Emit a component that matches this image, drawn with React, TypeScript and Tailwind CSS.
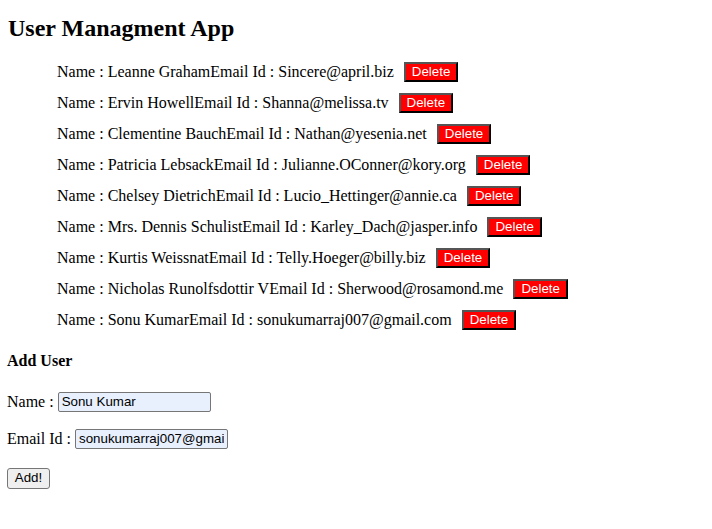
import React from "react";

const users = [
  ["Leanne Graham", "Sincere@april.biz"],
  ["Ervin Howell", "Shanna@melissa.tv"],
  ["Clementine Bauch", "Nathan@yesenia.net"],
  ["Patricia Lebsack", "Julianne.OConner@kory.org"],
  ["Chelsey Dietrich", "Lucio_Hettinger@annie.ca"],
  ["Mrs. Dennis Schulist", "Karley_Dach@jasper.info"],
  ["Kurtis Weissnat", "Telly.Hoeger@billy.biz"],
  ["Nicholas Runolfsdottir V", "Sherwood@rosamond.me"],
  ["Sonu Kumar", "sonukumarraj007@gmail.com"],
];

export default function App() {
  return (
    <div className="min-h-[529px] bg-white px-[8px] text-black text-[16px]" style={{ fontFamily: '"Liberation Serif", "Times New Roman", serif' }}>
      <h2 className="pt-[14px] text-[24px] font-bold leading-[28px]">User Managment App</h2>
      <ul className="mt-[20px] pl-[49px] flex flex-col gap-[11px]">
        {users.map(([n, e]) => (
          <li key={n} className="flex h-[20px] items-center leading-[18px]">
            <span>Name : {n}Email Id : {e}</span>
            <button
              className="ml-[10px] h-[20px] border-2 border-[#555] bg-[#ff0000] px-[6px] text-[13.33px] leading-[14px] text-white"
              style={{ fontFamily: '"Liberation Sans", Arial, sans-serif', borderStyle: "outset" }}
            >
              Delete
            </button>
          </li>
        ))}
      </ul>
      <div className="-ml-px">
        <h4 className="mt-[22px] font-bold leading-[18px]">Add User</h4>
        <div className="mt-[21px] flex h-[21px] items-center leading-[18px]">
          <span>Name :</span>
          <input
            readOnly
            value="Sonu Kumar"
            className="ml-[4px] h-[20px] w-[153px] rounded-[2px] border border-[#767676] bg-[#e8f0fe] px-[3px] text-[13.33px] outline-none"
            style={{ fontFamily: '"Liberation Sans", Arial, sans-serif' }}
          />
        </div>
        <div className="mt-[16px] flex h-[21px] items-center leading-[18px]">
          <span>Email Id :</span>
          <input
            readOnly
            value="sonukumarraj007@gmail.com"
            className="ml-[4px] h-[20px] w-[153px] rounded-[2px] border border-[#767676] bg-[#e8f0fe] px-[3px] text-[13.33px] outline-none"
            style={{ fontFamily: '"Liberation Sans", Arial, sans-serif' }}
          />
        </div>
        <div className="mt-[16px]">
          <button
            className="h-[21px] w-[43px] rounded-[3px] border border-[#767676] bg-[#efefef] text-[13.33px] leading-[14px] text-black"
            style={{ fontFamily: '"Liberation Sans", Arial, sans-serif' }}
          >
            Add!
          </button>
        </div>
      </div>
    </div>
  );
}
